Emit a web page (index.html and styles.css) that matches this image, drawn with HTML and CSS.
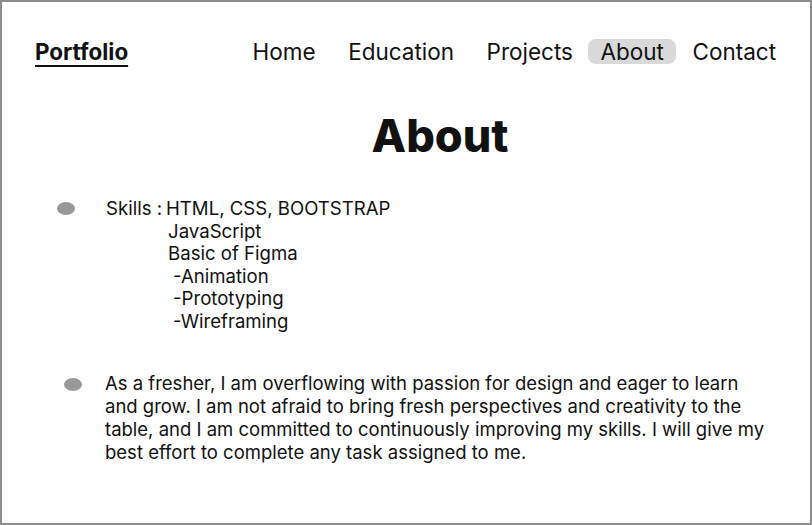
FILE: index.html
```html
<!DOCTYPE html>
<html>
<head>
<meta charset="utf-8">
<link rel="stylesheet" href="styles.css">
</head>
<body>
<div class="frame">
  <header class="header">
    <a class="logo">Portfolio</a>
    <nav class="nav">
      <a class="nav-item">Home</a>
      <a class="nav-item">Education</a>
      <a class="nav-item">Projects</a>
      <a class="nav-item active">About</a>
      <a class="nav-item">Contact</a>
    </nav>
  </header>
  <h1 class="title">About</h1>
  <ul class="list">
    <li class="item skills">
      <span class="dot"></span>
      <div class="skills-body">
        <span class="label">Skills :</span>
        <div class="skill-lines">
          <span>HTML, CSS, BOOTSTRAP</span>
          <span class="l2">JavaScript</span>
          <span class="l2">Basic of Figma</span>
          <span class="sub">-Animation</span>
          <span class="sub">-Prototyping</span>
          <span class="sub">-Wireframing</span>
        </div>
      </div>
    </li>
    <li class="item intro">
      <span class="dot"></span>
      <p class="para">As a fresher, I am overflowing with passion for design and eager to learn and grow. I am not afraid to bring fresh perspectives and creativity to the table, and I am committed to continuously improving my skills. I will give my best effort to complete any task assigned to me.</p>
    </li>
  </ul>
</div>
</body>
</html>
```
FILE: styles.css
```css
* { box-sizing: border-box; }
html, body { margin: 0; padding: 0; }
body {
  font-family: "Inter", "Noto Sans", sans-serif;
  color: #111;
  background: #fff;
}
.frame {
  width: 812px;
  height: 525px;
  border: 2px solid #8c8c8c;
  overflow: hidden;
}
.header {
  display: flex;
  justify-content: space-between;
  align-items: center;
  padding: 36px 26px 0 33px;
}
.logo {
  font-size: 22.4px;
  font-weight: 700;
  text-decoration: underline;
  text-decoration-thickness: 2px;
  text-underline-offset: 5px;
  color: #111;
}
.nav {
  display: flex;
  align-items: center;
  gap: 16.5px;
}
.nav-item {
  font-size: 22.5px;
  padding: 1px 8px;
  border-radius: 8px;
  line-height: 23px;
  color: #111;
}
.nav-item.active {
  background: #d9d9d9;
  padding: 1px 12px;
  margin: 0 -8px 0 -9px;
}
.title {
  margin: 44px 0 0 0;
  padding-left: 68px;
  text-align: center;
  font-size: 45px;
  font-weight: 800;
  line-height: 54px;
}
.list {
  list-style: none;
  margin: 34px 0 0 0;
  padding: 0;
}
.item {
  display: flex;
  align-items: flex-start;
}
.dot {
  width: 18px;
  height: 13px;
  border-radius: 50%;
  background: #999;
  flex: none;
}
.skills { padding-left: 55px; }
.skills .dot { margin-top: 5px; margin-right: 31px; }
.skills-body {
  display: flex;
  gap: 4px;
  font-size: 18.6px;
  line-height: 22.6px;
}
.skill-lines {
  display: flex;
  flex-direction: column;
}
.skill-lines .l2 { padding-left: 2px; }
.skill-lines .sub { padding-left: 7px; }
.intro {
  margin-top: 39px;
  padding-left: 62px;
}
.intro .dot { margin-top: 6px; margin-right: 23px; }
.para {
  margin: 0;
  width: 668px;
  font-size: 18.5px;
  line-height: 23px;
}
```
